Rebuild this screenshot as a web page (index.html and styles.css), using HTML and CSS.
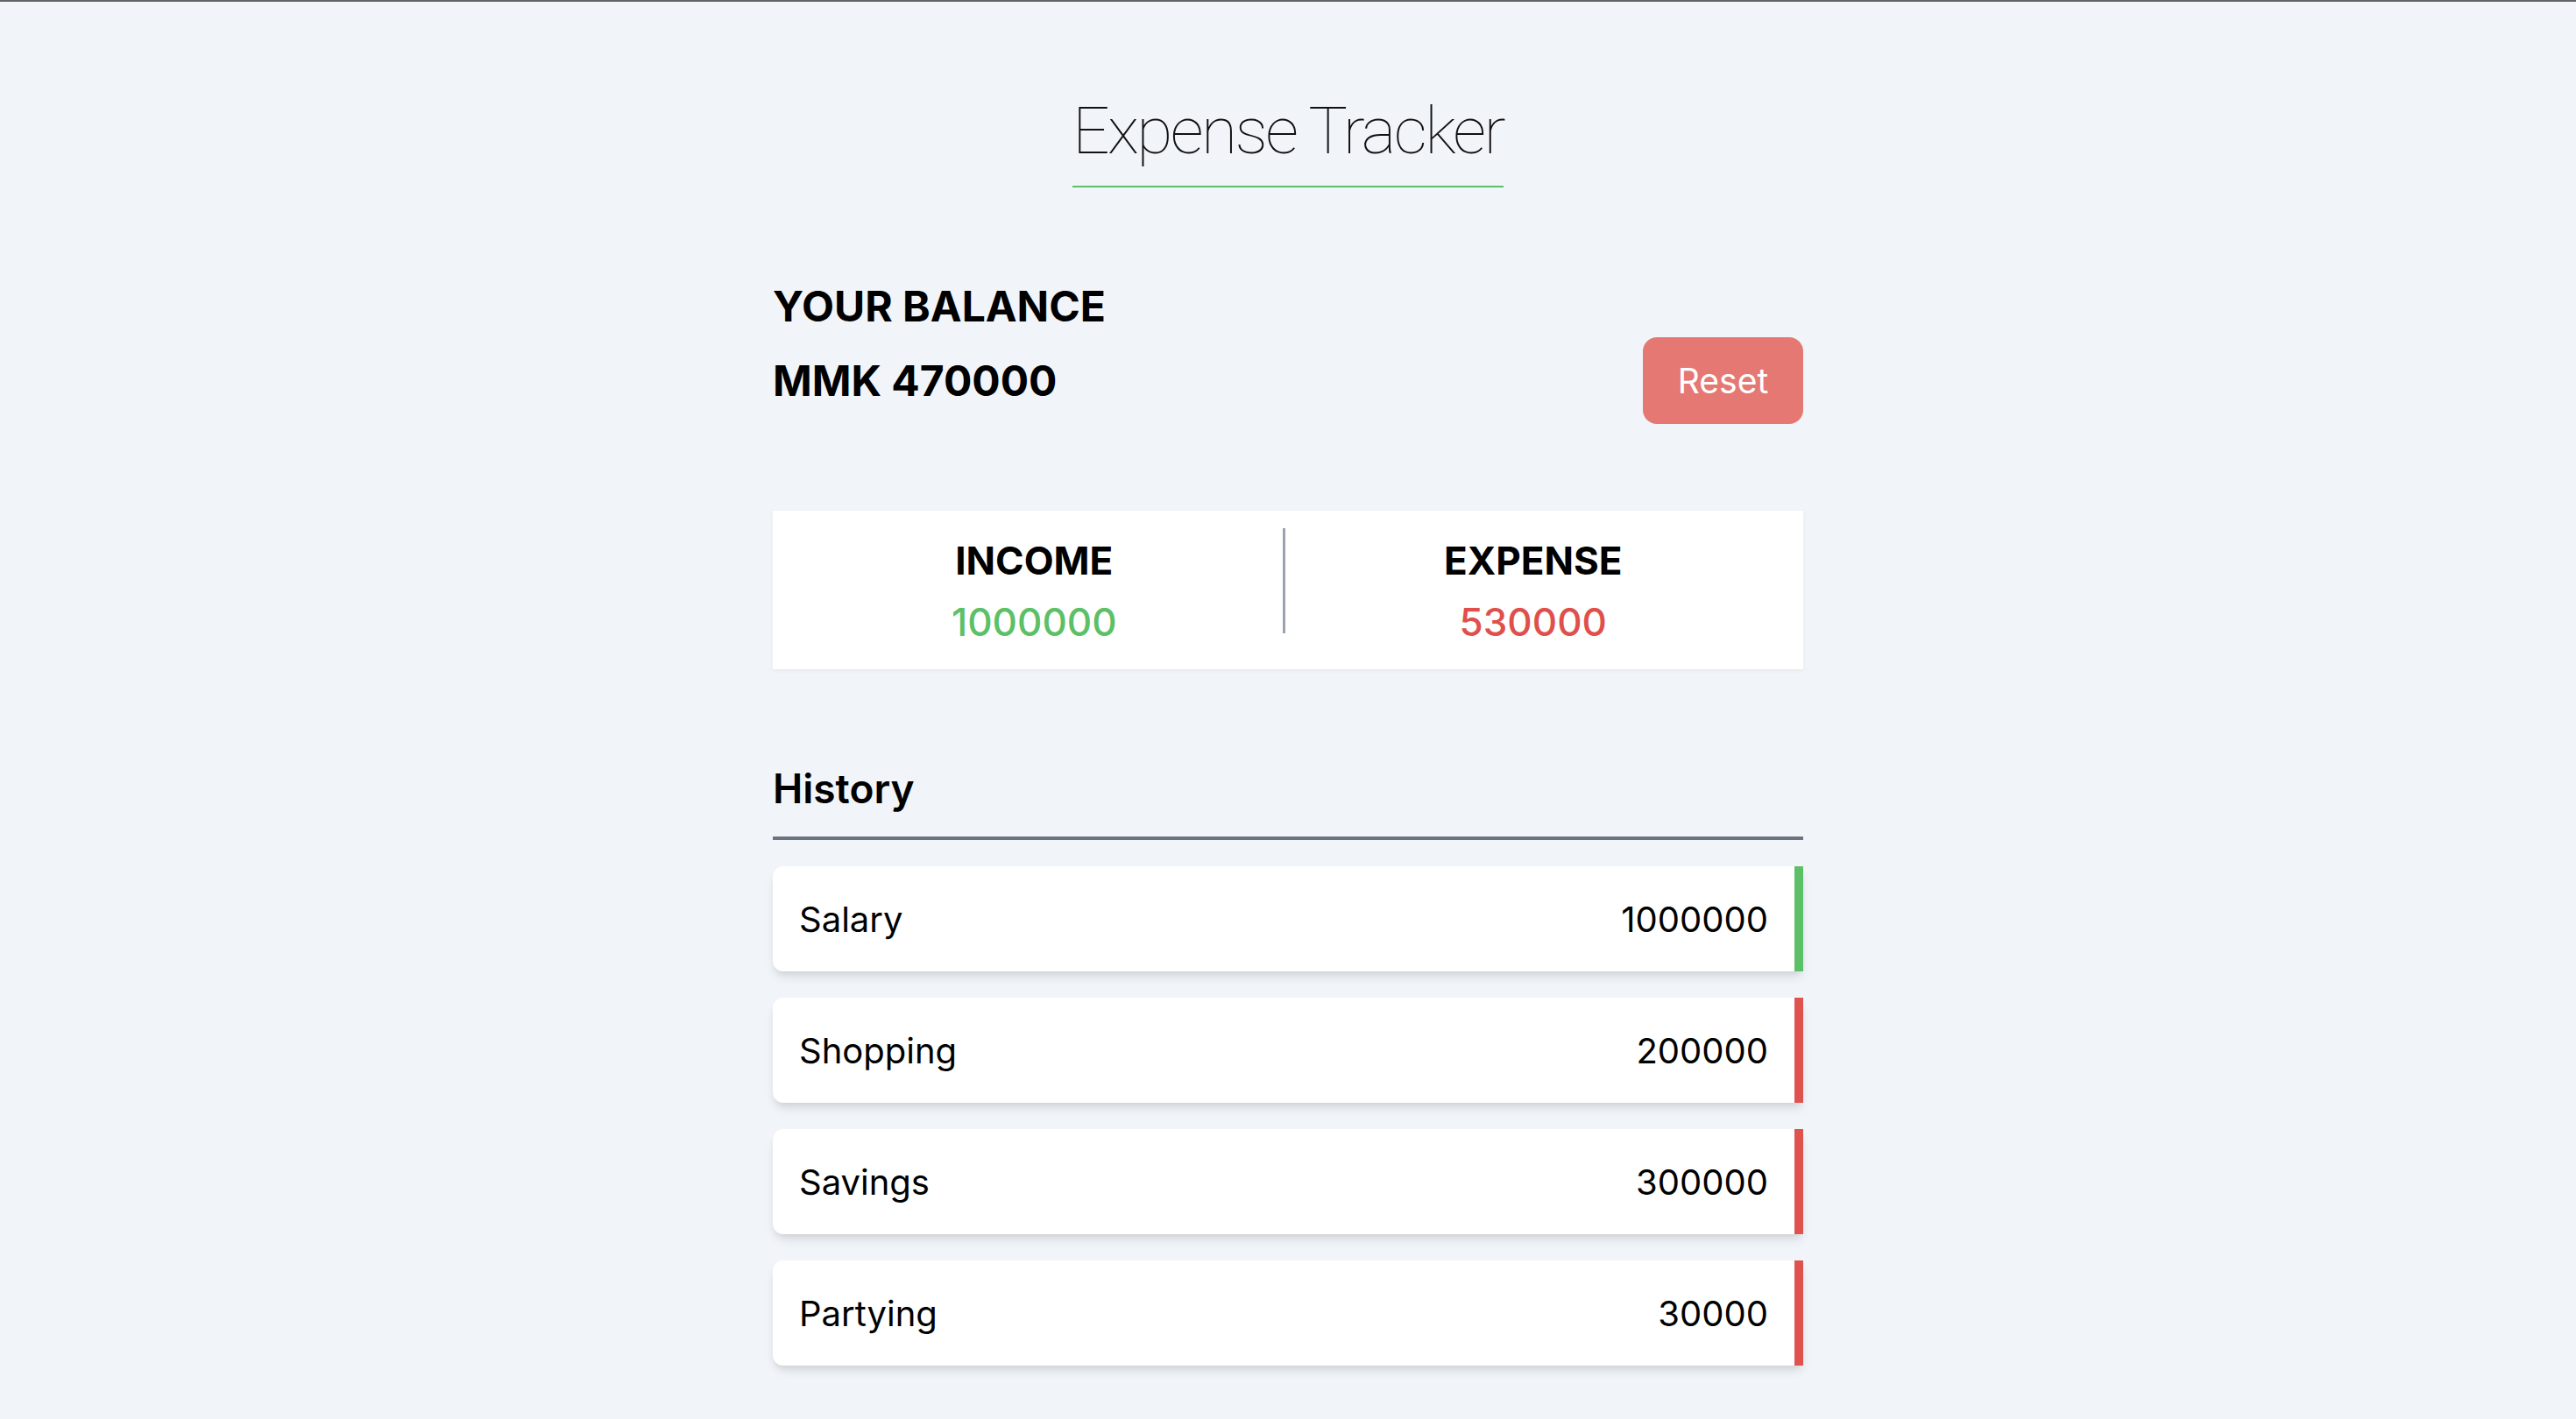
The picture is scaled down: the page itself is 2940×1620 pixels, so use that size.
FILE: index.html
```html
<!DOCTYPE html>
<html lang="en">
<head>
<meta charset="utf-8">
<title>Expense Tracker</title>
<link rel="stylesheet" href="styles.css">
</head>
<body>
<main class="app">
  <header class="header">
    <h1 class="title">Expense Tracker</h1>
  </header>

  <section class="balance">
    <div class="balance-text">
      <h2 class="balance-label">YOUR BALANCE</h2>
      <p class="balance-amount">MMK 470000</p>
    </div>
    <button class="reset-btn" type="button">Reset</button>
  </section>

  <section class="summary">
    <div class="summary-col">
      <h3 class="summary-label">INCOME</h3>
      <p class="summary-value income">1000000</p>
    </div>
    <div class="summary-divider"></div>
    <div class="summary-col">
      <h3 class="summary-label">EXPENSE</h3>
      <p class="summary-value expense">530000</p>
    </div>
  </section>

  <section class="history">
    <h3 class="history-title">History</h3>
    <ul class="history-list">
      <li class="history-item plus"><span>Salary</span><span>1000000</span></li>
      <li class="history-item minus"><span>Shopping</span><span>200000</span></li>
      <li class="history-item minus"><span>Savings</span><span>300000</span></li>
      <li class="history-item minus"><span>Partying</span><span>30000</span></li>
    </ul>
  </section>
</main>
</body>
</html>
```

FILE: styles.css
```css
* { box-sizing: border-box; }

html, body {
  margin: 0;
  padding: 0;
}

body {
  background: #f1f4f9;
  border-top: 2px solid #636363;
  font-family: Inter, "Noto Sans", "Liberation Sans", sans-serif;
  color: #000;
  height: 1620px;
  overflow: hidden;
}

.app {
  width: 1176px;
  margin: 0 auto;
}

.header {
  text-align: center;
  padding-top: 110px;
}

.title {
  display: inline-block;
  margin: 0;
  font-family: Roboto, "Liberation Sans", sans-serif;
  font-weight: 100;
  font-size: 75px;
  line-height: 75px;
  letter-spacing: -2.6px;
  color: #111;
  padding-bottom: 25px;
  border-bottom: 2px solid #5cc066;
}

.balance {
  display: flex;
  justify-content: space-between;
  align-items: flex-end;
  margin-top: 100px;
}

.balance-text {
  padding-bottom: 13px;
}

.balance-label,
.balance-amount {
  margin: 0;
  font-size: 48px;
  font-weight: 700;
  line-height: 72px;
}

.balance-amount {
  margin-top: 13px;
}

.reset-btn {
  width: 183px;
  height: 99px;
  border: none;
  border-radius: 16px;
  background: #e67873;
  color: #fff;
  font-family: Inter, "Noto Sans", sans-serif;
  font-size: 39px;
  font-weight: 400;
  cursor: pointer;
}

.summary {
  display: flex;
  align-items: flex-start;
  margin-top: 99px;
  background: #fff;
  padding: 20px 25px 21px 15px;
  box-shadow: 0 2px 6px rgba(0, 0, 0, 0.05);
}

.summary-col {
  flex: 1;
  text-align: center;
  padding-top: 4px;
}

.summary-divider {
  width: 3px;
  height: 120px;
  background: #9ca3af;
}

.summary-label {
  margin: 0;
  font-size: 44px;
  font-weight: 700;
  line-height: 66px;
}

.summary-value {
  margin: 4px 0 0;
  font-size: 44px;
  font-weight: 500;
  line-height: 66px;
}

.income { color: #5cc066; }
.expense { color: #df504c; }

.history {
  margin-top: 102px;
}

.history-title {
  margin: 0;
  font-size: 46px;
  font-weight: 600;
  line-height: 69px;
  padding-bottom: 20px;
  border-bottom: 4px solid #6b7280;
}

.history-list {
  list-style: none;
  margin: 30px 0 0;
  padding: 0;
  display: flex;
  flex-direction: column;
  gap: 30px;
}

.history-item {
  display: flex;
  justify-content: space-between;
  align-items: center;
  height: 120px;
  padding: 0 30px;
  background: #fff;
  border-radius: 12px 0 0 12px;
  font-size: 40px;
  font-weight: 400;
  box-shadow: 0 8px 12px -2px rgba(0, 0, 0, 0.1), 0 4px 8px -4px rgba(0, 0, 0, 0.1);
}

.history-item.plus { border-right: 10px solid #5cc066; }
.history-item.minus { border-right: 10px solid #df534f; }
```
